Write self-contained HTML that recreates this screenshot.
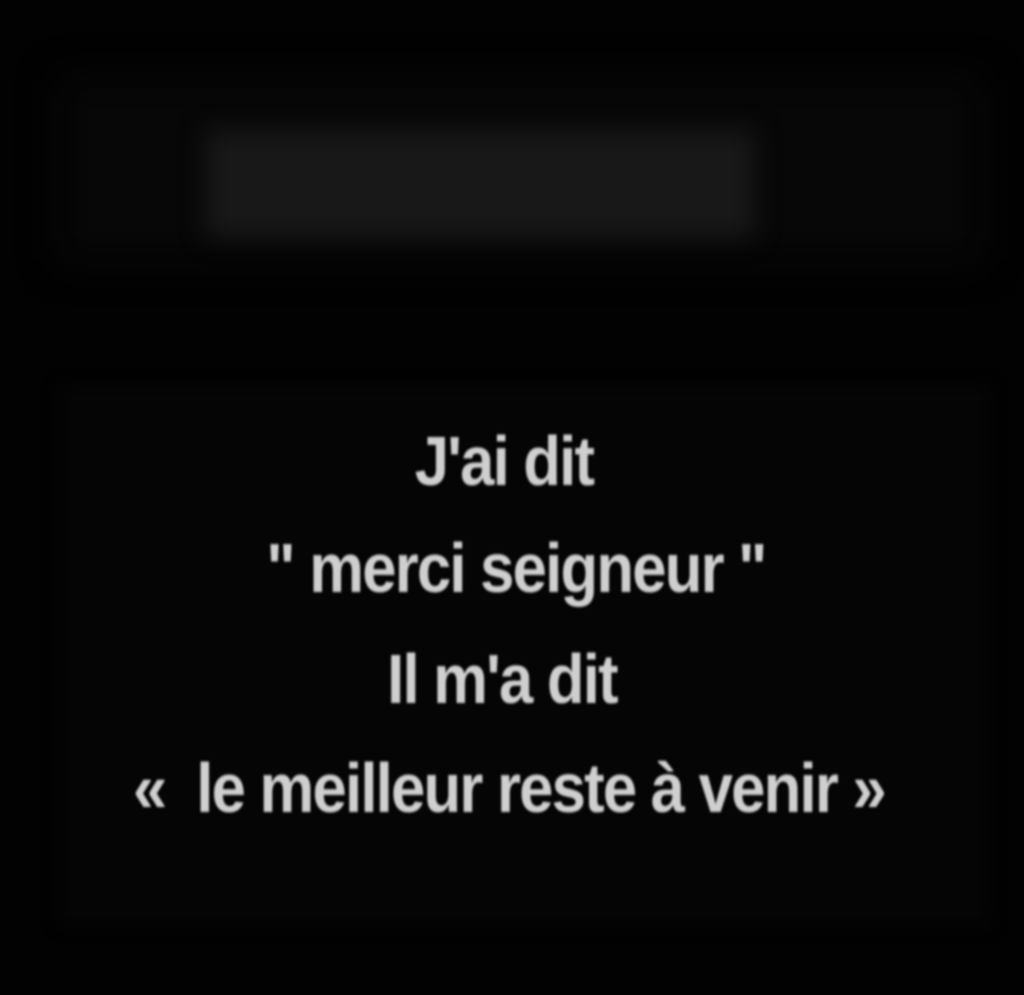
<!DOCTYPE html>
<html><head><meta charset="utf-8"><style>
html,body{margin:0;padding:0;background:#020202;width:1024px;height:995px;overflow:hidden;position:relative}
.band{position:absolute;left:205px;top:130px;width:550px;height:108px;background:#181818;filter:blur(12px)}
.band2{position:absolute;left:60px;top:80px;width:920px;height:180px;background:#070707;filter:blur(20px)}
.box{position:absolute;left:60px;top:385px;width:930px;height:540px;background:#050505;filter:blur(8px)}
.l{position:absolute;left:0;width:1024px;text-align:center;color:#cfcfcf;font-family:"Liberation Sans",sans-serif;font-weight:bold;font-size:70px;letter-spacing:-2px;filter:blur(1.2px);white-space:nowrap;line-height:1;transform:scaleX(0.88)}
</style></head><body>
<div class="band2"></div>
<div class="band"></div>
<div class="box"></div>
<div class="l" style="top:426px;left:-8px">J'ai dit</div>
<div class="l" style="top:533px;left:4px">" merci seigneur "</div>
<div class="l" style="top:644px;left:-10px">Il m'a dit</div>
<div class="l" style="top:753px;left:-3px">«&nbsp; le meilleur reste à venir »</div>
</body></html>
